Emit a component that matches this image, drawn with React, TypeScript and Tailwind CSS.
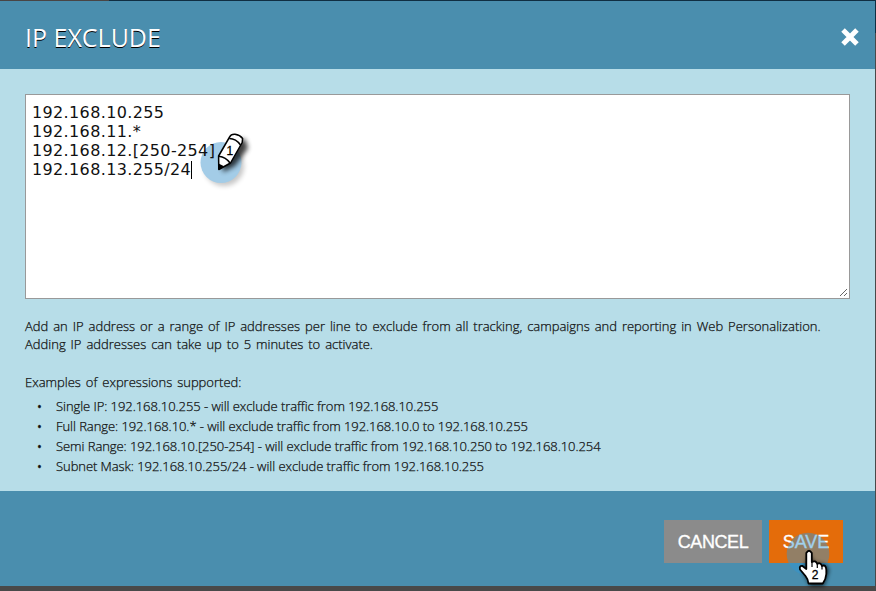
const addresses = ['192.168.10.255', '192.168.11.*', '192.168.12.[250-254]', '192.168.13.255/24'];

const examples = [
  'Single IP: 192.168.10.255 - will exclude traffic from 192.168.10.255',
  'Full Range: 192.168.10.* - will exclude traffic from 192.168.10.0 to 192.168.10.255',
  'Semi Range: 192.168.10.[250-254] - will exclude traffic from 192.168.10.250 to 192.168.10.254',
  'Subnet Mask: 192.168.10.255/24 - will exclude traffic from 192.168.10.255',
];

function CloseIcon() {
  return (
    <svg width="20" height="20" viewBox="0 0 20 20" className="block">
      <path d="M4.8 4.8 L15.2 15.2 M15.2 4.8 L4.8 15.2" stroke="#fff" strokeWidth="5" strokeLinecap="square" />
    </svg>
  );
}

function PencilGlow() {
  return (
    <svg width="70" height="75" viewBox="0 0 70 75" className="absolute left-[164px] top-[25px]">
      <defs>
        <filter id="soft" x="-50%" y="-50%" width="200%" height="200%">
          <feGaussianBlur stdDeviation="2.5" />
        </filter>
      </defs>
      <circle cx="34" cy="46" r="20" fill="#000" opacity=".22" filter="url(#soft)" />
      <circle cx="31" cy="42.5" r="20.5" fill="#a3cce7" />
      <path d="M33 52 L32 38 L45 20 L55 19 L58 28 L45 46 Z" fill="#000" opacity=".75" filter="url(#soft)" />
    </svg>
  );
}

function Pencil() {
  return (
    <svg width="70" height="75" viewBox="0 0 70 75" className="absolute left-[164px] top-[25px]">
      <path d="M28.8 49.5 L28.6 36 L39.6 17 Q41 14 45 14.3 Q50 15 52.6 18.5 L52.2 22.5 L40.5 43 Z" fill="#fff" stroke="#000" strokeWidth="1.5" strokeLinejoin="round" />
      <path d="M39.3 18.5 Q46 18.5 50.5 25 M28.8 36.2 Q36 37 40 43" fill="none" stroke="#000" strokeWidth="1.5" />
      <path d="M28.6 43.5 L34 46.3 L28.8 50 Z" />
      <text x="36.5" y="35" fontSize="12" letterSpacing="0" stroke="#000" strokeWidth=".3" fontFamily="Liberation Sans, Arial, sans-serif">1</text>
    </svg>
  );
}

function HandMarker() {
  return (
    <svg width="60" height="56" viewBox="0 0 60 56" className="absolute left-[11px] top-[15px] overflow-visible">
      <defs>
        <filter id="handShadow" x="-50%" y="-50%" width="200%" height="200%">
          <feGaussianBlur stdDeviation="2.2" />
        </filter>
      </defs>
      <circle cx="28" cy="19" r="21.3" fill="#2e96d7" opacity=".45" />
      <path d="M29 18 L34 27 L46 30 L49 35 L44 51 L30 51 L23 36 Z" fill="#000" opacity=".75" filter="url(#handShadow)" />
      <path d="M26.3 18 Q29 13.5 31.8 18 V27 Q35.5 25 37.3 28.8 Q40.5 27 42 31 Q46 29 46.3 35 V39 Q46 44 42.8 48.5 H28.5 Q28 44 25.5 41 L20 34.5 Q19 30.5 22.5 31 L26.3 34 Z" fill="#fff" stroke="#000" strokeWidth="1.8" strokeLinejoin="round" />
      <path d="M32 27 V32 M37.3 29 V33 M42 31 V34.5" stroke="#000" strokeWidth="1.2" />
      <text x="31.7" y="44" fontSize="12" stroke="#000" strokeWidth=".3" fontFamily="Liberation Sans, Arial, sans-serif">2</text>
    </svg>
  );
}

export default function App() {
  return (
    <div className="flex h-[591px] w-[876px] flex-col overflow-hidden bg-[#494949] font-['Open_Sans',sans-serif]">
      <div className="flex h-px shrink-0">
        <div className="w-[109px] bg-[#494545]" />
        <div className="grow bg-[#102e42]" />
      </div>
      <div className="flex h-[585px] shrink-0">
        <div className="flex w-[875px] flex-col">
          <header className="flex h-[68px] items-center justify-between bg-[#4a8eae] pl-[25px] pr-[15px]">
            <h1 className="pt-[4px] text-[25px] leading-[34px] text-white [text-shadow:0_1px_0_#000]">IP EXCLUDE</h1>
            <button className="pt-[3px]" aria-label="Close"><CloseIcon /></button>
          </header>
          <main className="h-[422px] bg-[#b7dde8] px-[25px] pt-[25px] text-[13px] font-light text-[#111]">
            <div className="relative h-[205px] border border-[#999] bg-white px-[6px] pt-[8px] font-['DejaVu_Sans',sans-serif] text-[16px] font-normal leading-[19px] tracking-[.36px] text-[#111]">
              <PencilGlow />
              <div className="relative">
                {addresses.map((line, i) => (
                  <div key={line} className="flex h-[19px]">
                    {line}
                    {i === 3 && <span className="mt-px h-[18px] w-px bg-black" />}
                  </div>
                ))}
              </div>
              <Pencil />
              <svg width="9" height="9" viewBox="0 0 9 9" className="absolute bottom-px right-px">
                <path d="M1 8 L8 1 M5 8 L8 5" stroke="#666" strokeWidth="1" />
              </svg>
            </div>
            <div className="[-webkit-text-stroke:0.25px_#111]">
              <p className="mt-[18px] whitespace-nowrap leading-[18px] [word-spacing:1.55px]">
                Add an IP address or a range of IP addresses per line to exclude from all tracking, campaigns and reporting in Web Personalization.
                <br />
                Adding IP addresses can take up to 5 minutes to activate.
              </p>
              <p className="mt-[20px] leading-[18px] [word-spacing:1.55px]">Examples of expressions supported:</p>
              <ul className="mt-[5px] tracking-[-.06px]">
                {examples.map((text) => (
                  <li key={text} className="flex h-5 items-center whitespace-nowrap leading-5">
                    <span className="w-[31px] pl-[12px] font-normal">•</span>
                    {text}
                  </li>
                ))}
              </ul>
            </div>
          </main>
          <footer className="flex h-[95px] justify-end gap-[7px] bg-[#4a8eae] pr-[32px] pt-[29px] font-['Liberation_Sans',Arial,sans-serif] text-[18px] text-white [-webkit-text-stroke:0.3px_white]">
            <button className="h-[43px] w-[98px] bg-[#8b8b8b] pt-px tracking-[-.4px]">CANCEL</button>
            <div className="relative h-[43px] w-[74px]">
              <button className="h-[43px] w-[74px] bg-[#e46c0a] pt-px">SAVE</button>
              <HandMarker />
            </div>
          </footer>
        </div>
        <div className="flex w-px flex-col">
          <div className="h-8 bg-[#102e42]" />
          <div className="grow bg-[#494949]" />
        </div>
      </div>
    </div>
  );
}
